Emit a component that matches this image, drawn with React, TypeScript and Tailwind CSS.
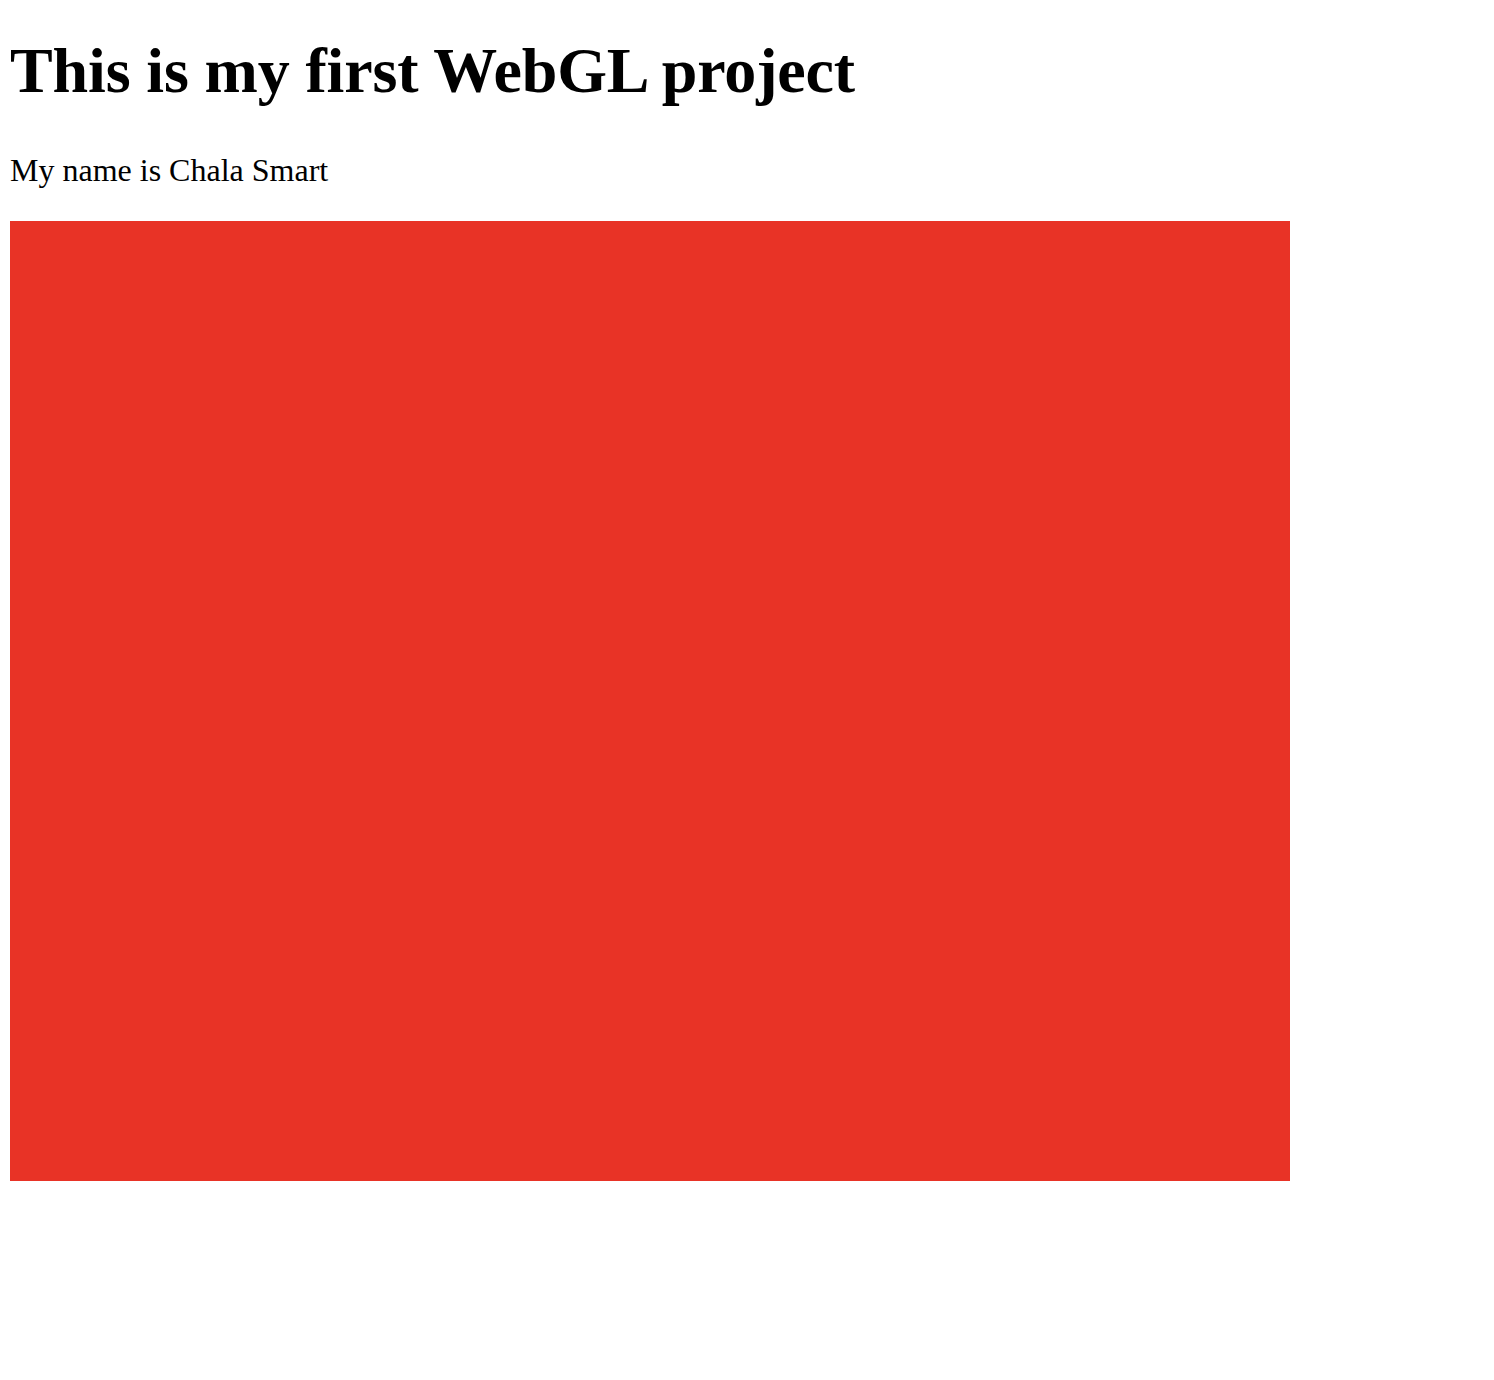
export default function App() {
  return (
    <div
      className="min-h-[1380px] bg-white pl-[10px] text-black"
      style={{ fontFamily: '"Liberation Serif", "Times New Roman", serif' }}
    >
      <h1 className="pt-[39px] text-[64px] font-bold leading-[64px] tracking-[-0.14px]">
        This is my first WebGL project
      </h1>
      <p className="mt-[51px] text-[32px] leading-[32px]">My name is Chala Smart</p>
      <div className="mt-[35px] h-[960px] w-[1280px] bg-[#e83326]" />
    </div>
  );
}
